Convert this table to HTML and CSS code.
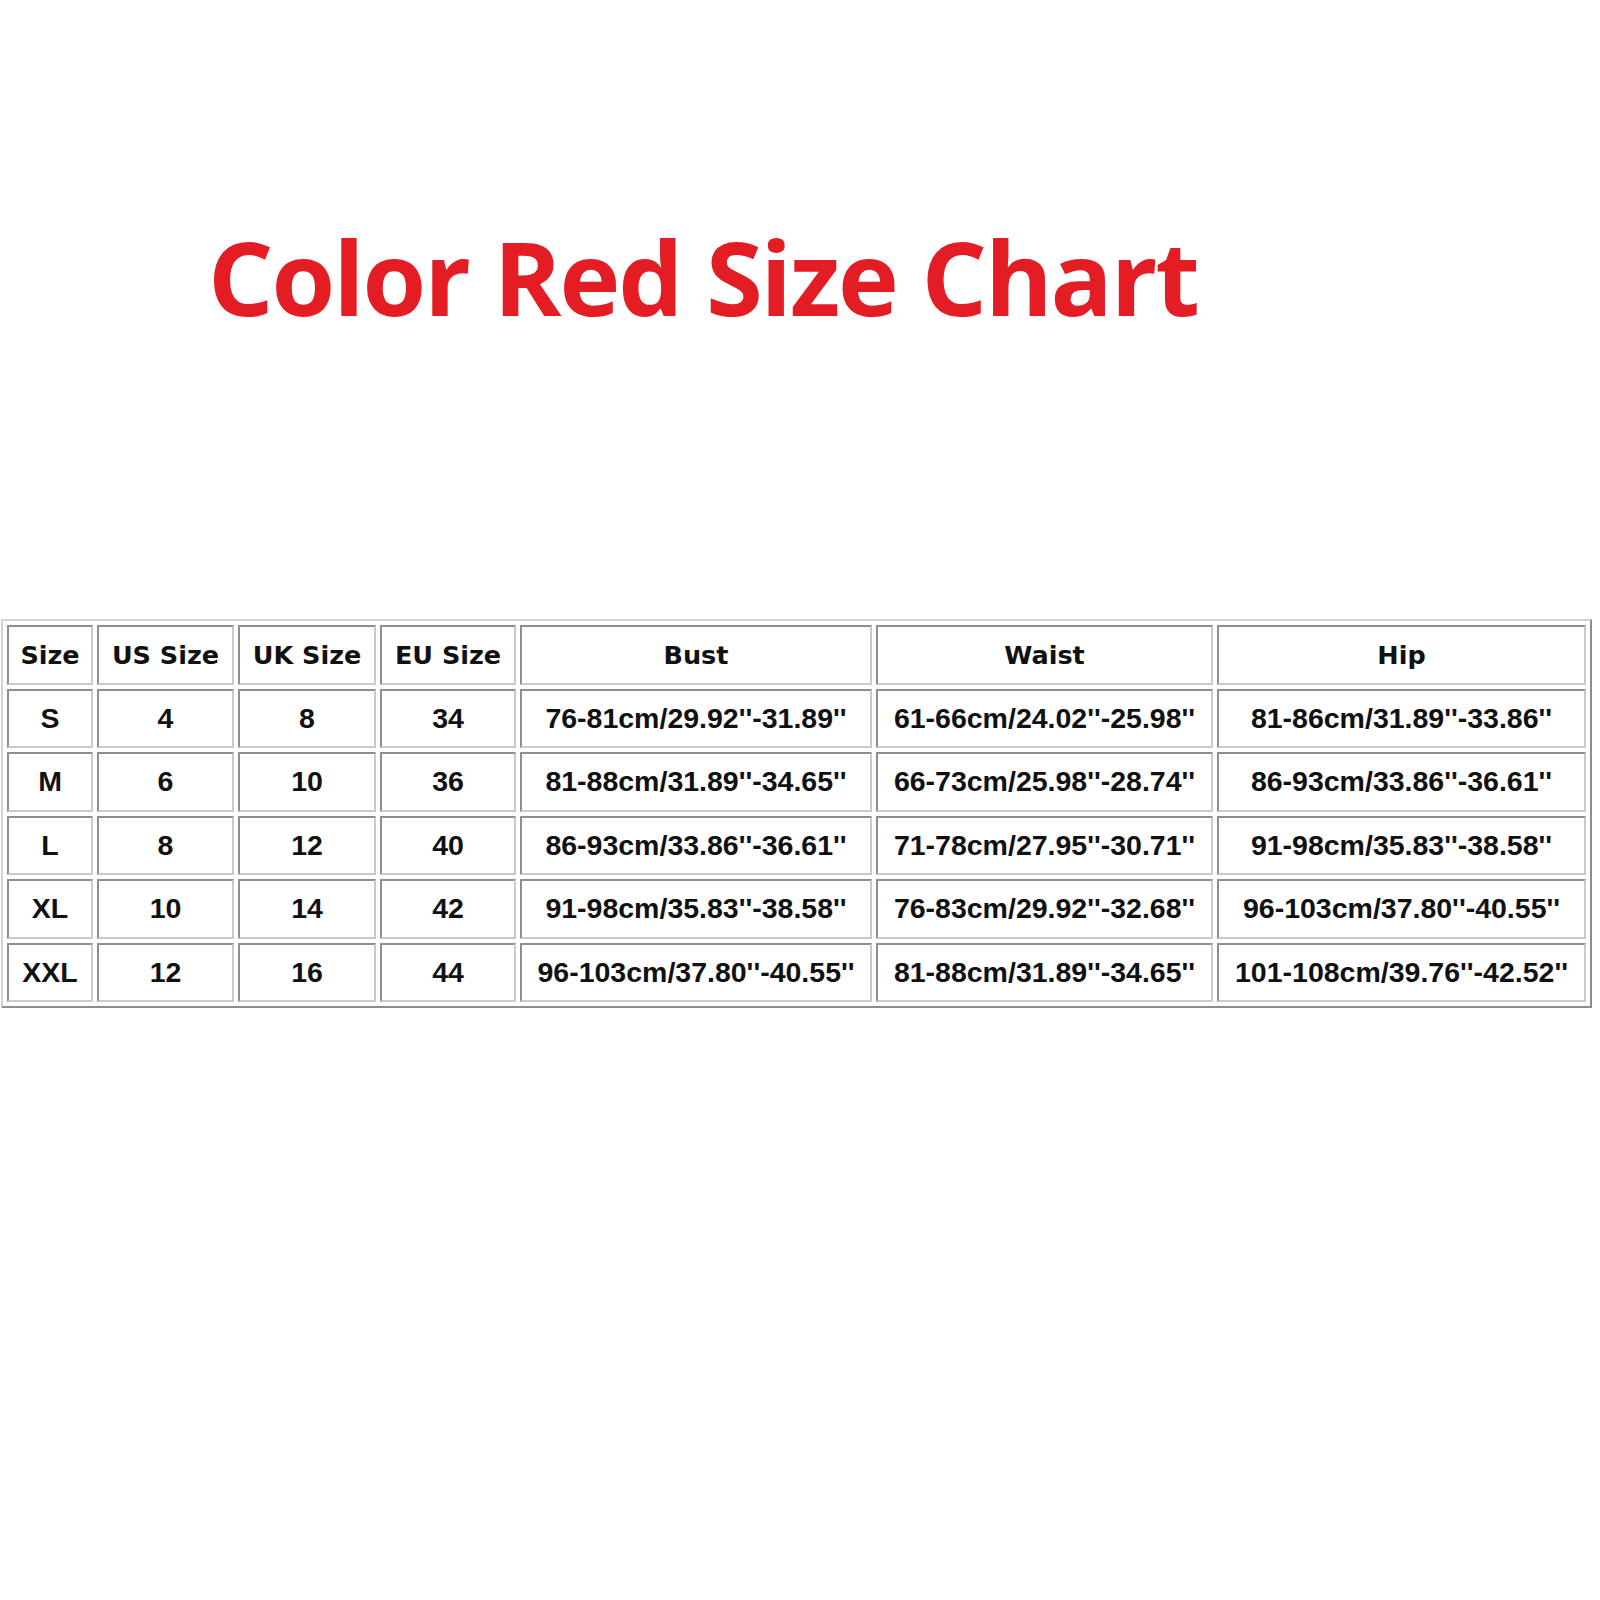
FILE: index.html
```html
<!DOCTYPE html>
<html>
<head>
<meta charset="utf-8">
<link rel="stylesheet" href="styles.css">
</head>
<body>
<div class="page">
  <h1 class="title">Color Red Size Chart</h1>
  <table class="chart">
    <thead>
      <tr>
        <th class="c-size">Size</th>
        <th class="c-us">US Size</th>
        <th class="c-uk">UK Size</th>
        <th class="c-eu">EU Size</th>
        <th class="c-bust">Bust</th>
        <th class="c-waist">Waist</th>
        <th class="c-hip">Hip</th>
      </tr>
    </thead>
    <tbody>
      <tr><td>S</td><td>4</td><td>8</td><td>34</td><td>76-81cm/29.92''-31.89''</td><td>61-66cm/24.02''-25.98''</td><td>81-86cm/31.89''-33.86''</td></tr>
      <tr><td>M</td><td>6</td><td>10</td><td>36</td><td>81-88cm/31.89''-34.65''</td><td>66-73cm/25.98''-28.74''</td><td>86-93cm/33.86''-36.61''</td></tr>
      <tr><td>L</td><td>8</td><td>12</td><td>40</td><td>86-93cm/33.86''-36.61''</td><td>71-78cm/27.95''-30.71''</td><td>91-98cm/35.83''-38.58''</td></tr>
      <tr><td>XL</td><td>10</td><td>14</td><td>42</td><td>91-98cm/35.83''-38.58''</td><td>76-83cm/29.92''-32.68''</td><td>96-103cm/37.80''-40.55''</td></tr>
      <tr><td>XXL</td><td>12</td><td>16</td><td>44</td><td>96-103cm/37.80''-40.55''</td><td>81-88cm/31.89''-34.65''</td><td>101-108cm/39.76''-42.52''</td></tr>
    </tbody>
  </table>
</div>
</body>
</html>
```

FILE: styles.css
```css
html, body {
  margin: 0;
  padding: 0;
  background: #ffffff;
}

.page {
  width: 1600px;
  height: 1600px;
  display: flex;
  flex-direction: column;
  align-items: flex-start;
}

.title {
  margin: 216px 0 0 208px;
  font-family: "Open Sans", "Liberation Sans", sans-serif;
  font-weight: 700;
  font-size: 103px;
  line-height: 120px;
  color: #e41d25;
  letter-spacing: -2.1px;
  white-space: nowrap;
}

.chart {
  margin: 283px 0 0 1px;
  border-collapse: separate;
  border-spacing: 4px;
  border-style: solid;
  border-width: 2px;
  border-color: #d2d2d2 #8c8c8c #8c8c8c #d2d2d2;
  table-layout: fixed;
  width: 1591px;
}

.chart th,
.chart td {
  box-sizing: border-box;
  height: 59.5px;
  padding: 0;
  text-align: center;
  vertical-align: middle;
  border-style: solid;
  border-width: 2px;
  border-color: #8e8e8e #cacaca #cacaca #8e8e8e;
  color: #111111;
  white-space: nowrap;
}

.chart th {
  font-family: "DejaVu Sans", Verdana, sans-serif;
  font-weight: 700;
  font-size: 25.5px;
}

.chart td {
  font-family: "Liberation Sans", Arial, sans-serif;
  font-weight: 700;
  font-size: 28.5px;
}

.c-size { width: 86px; }
.c-us { width: 137px; }
.c-uk { width: 138px; }
.c-eu { width: 136px; }
.c-bust { width: 352px; }
.c-waist { width: 337px; }
.c-hip { width: 369px; }
```
